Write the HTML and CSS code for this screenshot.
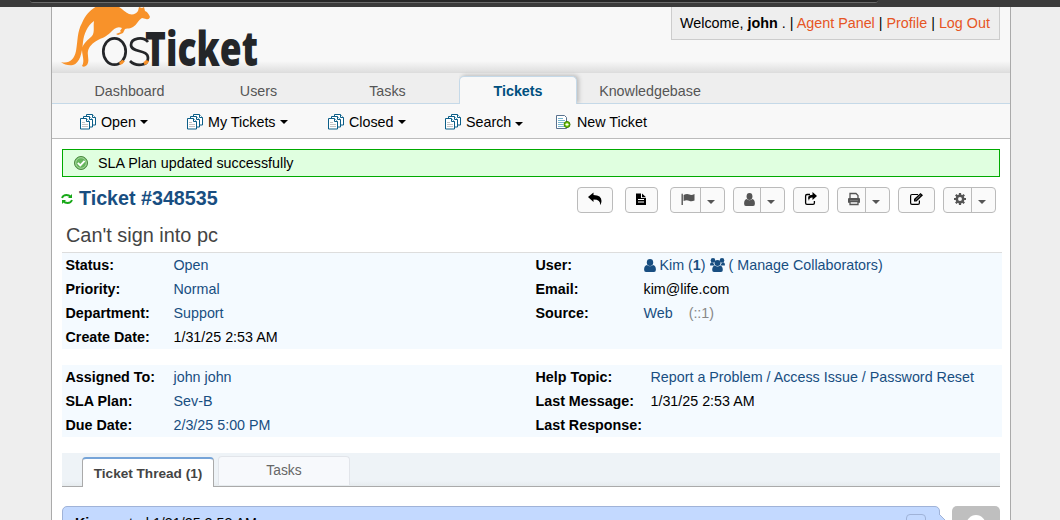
FILE: index.html
```html
<!DOCTYPE html>
<html lang="en">
<head>
<meta charset="utf-8">
<title>osTicket - Ticket #348535</title>
<link rel="stylesheet" href="styles.css">
</head>
<body>
<svg class="defs" width="0" height="0">
  <symbol id="stack" viewBox="0 0 16 16">
    <g fill="#fff" stroke="#0b5e88" stroke-width="1">
      <path d="M6.500 .5h6l3 3v7.500h-9z"/><path d="M12.500 .5v3h3"/>
      <path d="M3.500 2.500h6l3 3v7.500h-9z"/><path d="M9.500 2.500v3h3"/>
      <path d="M.5 4.500h6l3 3v7.500h-9z"/><path d="M6.500 4.500v3h3"/>
    </g>
    <path d="M2 8.500h3M2 10.500h6M2 12.500h6" stroke="#c4c4c4" fill="none"/>
  </symbol>
  <symbol id="user" viewBox="0 0 12 12"><circle cx="6" cy="3.200" r="3.200"/><path d="M3 5.600Q6 7.800 9 5.600Q11.900 6 11.900 10Q11.900 12 10 12H2Q.1 12 .1 10Q.1 6 3 5.600z"/></symbol>
</svg>
<div class="browser"><div class="address"></div></div>
<div class="container">
  <header class="header">
    <svg class="logo" viewBox="52 7 216 64" width="216" height="64">
      <path fill="#f8922a" d="M61 62C69 64 74 60 76 51C78 40 77 32 82 23C86 14 91 9 99 5H115C121 7 124 12 129 14C133 15 136 14 138 11L139 7L142 8L144 7L145 11C148 12 149 15 150 17Q149 20 146 19L142 18C138 20 137 25 133 27C130 29 128 28 125 29L123 33L118 35L116 34L121 32L120 31L122 28C117 26 114 29 111 32C106 37 102 38 98 40C92 43 89 47 88 51C87 56 90 60 87 65Q84 68 82 66C85 61 82 55 82 50C82 44 88 40 92 36C95 32 93 27 94 21C87 26 84 34 83 42C82 53 80 63 73 65Q66 66 61 62z"/>
      <ellipse cx="114.500" cy="51.500" rx="11.200" ry="13.200" fill="none" stroke="#242629" stroke-width="2.700"/>
      <path d="M148 42C143 36 131 38 131 45C131 53 148 49 148 58C148 66 136 67 130 61" fill="none" stroke="#242629" stroke-width="2.700"/>
      <path d="M119.500 63.500Q122 63 123.500 60.500M144 63.500Q147 62.500 147.500 60.500" fill="none" stroke="#f8922a" stroke-width="3.200"/>
      <text class="logo-text" x="145" y="66" textLength="113" lengthAdjust="spacingAndGlyphs">Ticket</text>
    </svg>
    <p class="welcome">Welcome, <b>john</b> . | <a>Agent Panel</a> | <a>Profile</a> | <a>Log Out</a></p>
  </header>
  <nav class="nav">
    <a>Dashboard</a><a>Users</a><a>Tasks</a><a class="active">Tickets</a><a class="knowledge">Knowledgebase</a>
  </nav>
  <nav class="subnav">
    <a class="open"><svg class="ico"><use href="#stack"/></svg>Open<i class="caret"></i></a>
    <a class="mine"><svg class="ico"><use href="#stack"/></svg>My Tickets<i class="caret"></i></a>
    <a class="closed"><svg class="ico"><use href="#stack"/></svg>Closed<i class="caret"></i></a>
    <a class="search"><svg class="ico"><use href="#stack"/></svg>Search<i class="caret wide"></i></a>
    <a class="new"><svg class="ico" viewBox="0 0 16 16"><path d="M.5 1.500h8l2 2v11h-10z" fill="#fff" stroke="#59718e"/><path d="M2 4.500h5M2 6.500h7M2 8.500h6M2 10.500h5M2 12.500h6" stroke="#75b5ce"/><circle cx="11" cy="10.500" r="3" fill="#75c80c" stroke="#347900"/><path d="M11 9v3M9.500 10.500h3" stroke="#fff"/></svg>New Ticket</a>
  </nav>
  <main class="content">
    <div class="notice"><svg width="16" height="16" viewBox="0 0 16 16"><circle cx="8" cy="8" r="6.500" fill="#65b45c" stroke="#4a883f"/><circle cx="8" cy="8" r="5.300" fill="none" stroke="#b7dfb0" stroke-width=".8"/><path d="M4.800 7.900l2.500 2.500 4.300-4.600" fill="none" stroke="#fff" stroke-width="1.900"/></svg>SLA Plan updated successfully</div>
    <div class="titlebar">
      <h2><svg class="refresh" width="12" height="12" viewBox="0 0 12 12" fill="none" stroke="#18a818" stroke-width="1.800"><path d="M1 5Q2 2 5.500 2Q8 2 10 4M11 7Q10 10 6.500 10Q4 10 2 8"/><path d="M11 1v4H7zM1 11V7h4z" fill="#18a818" stroke="none"/></svg>Ticket #348535</h2>
      <div class="actions">
        <span class="btn reply"><svg width="14" height="14" viewBox="0 0 14 14"><path d="M0 5L5.500.5V3Q13.500 3 13.500 9Q13.500 11.500 12 13.300Q13 7.500 5.500 7.500V10z"/></svg></span>
        <span class="btn note"><svg width="12" height="14" viewBox="0 0 12 14"><path d="M1 1.500h5v4.500h5v7H1z"/><path d="M7 1.500l4 3.800H7z"/><path d="M3 7.500h6M3 10h6" stroke="#fff"/></svg></span>
        <span class="btn split flag"><svg width="14" height="14" viewBox="0 0 14 14"><path d="M.5 2.500Q.5 1.500 1.200 1.500Q2 1.500 1.900 3V13H.5zM2.600 3Q6 1 8.500 2.600Q10.500 3.500 13.500 2V8.500Q10.500 10 8 8.700Q5.500 7.700 2.600 9z"/></svg><i></i></span>
        <span class="btn split assign"><svg width="11" height="13" viewBox="0 0 12 12" preserveAspectRatio="none"><use href="#user" width="12" height="12"/></svg><i></i></span>
        <span class="btn share"><svg width="14" height="14" viewBox="0 0 14 14"><path d="M6 2.500H3Q1.600 2.500 1.600 4V11Q1.600 12.400 3 12.400H9Q10.400 12.400 10.400 11V9" fill="none" stroke="#000" stroke-width="1.300"/><path d="M8.500 0L13 4L8.500 8V5.500Q5 5.300 5 9Q2 3 8.500 2.800z"/></svg></span>
        <span class="btn split print"><svg width="14" height="14" viewBox="0 0 14 14"><path d="M3 6V1.500h6l2 2V6M3 9.500h8v3H3z" fill="none" stroke="#555" stroke-width="1.300"/><path d="M1 7Q1 6 2 6H12Q13 6 13 7V10.700H11V8.800H3V10.700H1z"/></svg><i></i></span>
        <span class="btn edit"><svg width="15" height="14" viewBox="0 0 15 14"><path d="M9 2.500H3Q1.600 2.500 1.600 4V11Q1.600 12.400 3 12.400H9Q10.400 12.400 10.400 11V8.500" fill="none" stroke="#000" stroke-width="1.200"/><path d="M5 9.500V7L11.500 1L14 3.300L7.500 9.500z"/><path d="M6.500 8L11.500 3.200" stroke="#fff" stroke-width=".6"/></svg></span>
        <span class="btn split gear"><svg width="12" height="12" viewBox="0 0 12 12"><circle cx="6" cy="6" r="3.200" fill="none" stroke="#555" stroke-width="2.500"/><path d="M6 0v2.500M6 9.500V12M0 6h2.500M9.500 6H12M1.800 1.800l1.700 1.700M8.500 8.500l1.700 1.700M10.200 1.800L8.500 3.500M3.500 8.500l-1.700 1.700" stroke="#555" stroke-width="2.200"/></svg><i></i></span>
      </div>
    </div>
    <h3>Can't sign into pc</h3>
    <section class="info first">
      <dl>
        <dt>Status:</dt><dd><a>Open</a></dd>
        <dt>Priority:</dt><dd><a>Normal</a></dd>
        <dt>Department:</dt><dd><a>Support</a></dd>
        <dt>Create Date:</dt><dd>1/31/25 2:53 AM</dd>
      </dl>
      <dl>
        <dt>User:</dt><dd><a class="people"><svg width="12" height="13" viewBox="0 0 12 12" preserveAspectRatio="none"><use href="#user" width="12" height="12"/></svg><span>Kim (<b>1</b>)</span><svg width="15" height="14" viewBox="0 0 15 14"><circle cx="3" cy="2.400" r="2.300"/><circle cx="12" cy="2.400" r="2.300"/><path d="M0 7Q0 4 2 4.200Q4 5 4.500 7.500H1Q0 7.500 0 7zM15 7Q15 4 13 4.200Q11 5 10.500 7.500H14Q15 7.500 15 7z"/><circle cx="7.500" cy="5" r="3"/><path d="M4.800 7.500Q7.500 9.300 10.200 7.500Q12.800 8 12.800 12Q12.800 14 11 14H4Q2.200 14 2.200 12Q2.200 8 4.800 7.500z"/></svg><span>( Manage Collaborators)</span></a></dd>
        <dt>Email:</dt><dd>kim@life.com</dd>
        <dt>Source:</dt><dd><a>Web</a><span class="ip">(::1)</span></dd>
      </dl>
    </section>
    <section class="info second">
      <dl>
        <dt>Assigned To:</dt><dd><a>john john</a></dd>
        <dt>SLA Plan:</dt><dd><a>Sev-B</a></dd>
        <dt>Due Date:</dt><dd><a>2/3/25 5:00 PM</a></dd>
      </dl>
      <dl>
        <dt>Help Topic:</dt><dd><a>Report a Problem / Access Issue / Password Reset</a></dd>
        <dt>Last Message:</dt><dd>1/31/25 2:53 AM</dd>
        <dt>Last Response:</dt><dd></dd>
      </dl>
    </section>
    <div class="tabs"><span class="tab current">Ticket Thread (1)</span><span class="tab">Tasks</span></div>
    <div class="thread">
      <div class="message"><span><b>Kim</b> posted 1/31/25 2:53 AM</span><span class="menu"></span></div>
      <svg class="pointer" width="12" height="30" viewBox="0 0 12 30"><path d="M0 8L8 16L0 24z" fill="#c3d9ff"/><path d="M0 8L8 16" stroke="#a0b3d8"/></svg>
      <div class="avatar"><i></i></div>
    </div>
  </main>
</div>
</body>
</html>
```
FILE: styles.css
```css
* { box-sizing: border-box; }
body { margin: 0; width: 1060px; height: 520px; overflow: hidden; background: #eee; color: #000; font: 14.3px/24px "Liberation Sans", Arial, sans-serif; }
p, h2, h3, dl, dd { margin: 0; }
.defs { display: block; position: absolute; }
svg { flex: none; }
.browser { height: 7px; background: #3b3b3b; padding-left: 30px; }
.address { width: 848px; height: 3px; background: #282828; border-bottom: 1px solid #6b6b6b; border-radius: 0 0 8px 8px; }
.container { width: 960px; height: 513px; margin-left: 51px; background: #fff; border: solid #aaa; border-width: 0 1px; overflow: hidden; }
.header { height: 66px; display: flex; justify-content: space-between; align-items: flex-start; background: linear-gradient(#f8f8f8 83%, #dfdfdf); border-bottom: 1px solid #ddd; }
.logo-text { font: 800 48px "Open Sans", sans-serif; fill: #242629; }
.welcome { width: 329px; height: 33px; margin-right: 10px; padding: 4px 0 0 8px; background: #eee; border: 1px solid #ccc; border-top: 0; white-space: nowrap; font-size: 14.35px; }
.welcome a { color: #e65524; }
.nav { height: 31px; display: flex; padding: 3px 0 0 13px; background: #eee; border-bottom: 1px solid #c5d9e8; color: #555; }
.nav a { width: 129px; height: 27px; padding-top: 3px; text-align: center; }
.nav a.active { width: 118px; height: 28px; margin-left: 7px; border: 1px solid #c5d9e8; border-bottom: 0; border-radius: 5px 5px 0 0; background: #f8f8f8; color: #00507f; font-weight: bold; padding-top: 2px; box-shadow: 2px -1px 4px #bbb; clip-path: inset(-8px -8px 0 0); }
.nav a.knowledge { width: 146px; }
.subnav { height: 35px; display: flex; align-items: center; padding: 2px 0 0 28px; background: #f8f8f8; border-bottom: 1px solid #bbb; }
.subnav a { display: flex; align-items: center; white-space: nowrap; }
.ico { width: 16px; height: 16px; margin-right: 5px; }
.open { width: 107px; }
.mine { width: 141px; }
.closed { width: 117px; }
.search { width: 111px; }
.caret { border: solid transparent; border-width: 3.5px 3.5px 0; border-top-color: #000; margin-left: 5px; }
.caret { border-width: 4px 4px 0; margin-left: 4px; }
.caret.wide { margin: 4px 0 0 4px; }
.content { padding: 10px 10px 0; }
.notice { height: 28px; display: flex; align-items: center; gap: 9px; padding-left: 10px; background: #e0ffe0; border: 1px solid #0a0; }
.titlebar { height: 40px; display: flex; justify-content: space-between; padding: 9px 4px 0 0; }
h2 { display: flex; align-items: center; gap: 6px; height: 24px; margin-left: -1px; color: #184e81; font-size: 19.7px; }
.refresh { margin-top: 2px; }
.actions { display: flex; margin-top: 1px; }
.btn { height: 26px; display: flex; align-items: center; justify-content: center; background: #fafafa; border: 1px solid #bbb; border-radius: 4px; margin-left: 8px; fill: #000; }
.btn > svg { margin: -2px 1px 0 0; }
.reply { width: 36px; }
.note { width: 33px; margin-left: 12px; }
.share { width: 36px; }
.edit { width: 37px; }
.flag { margin-left: 12px; }
.split { width: 53px; justify-content: space-between; padding-left: 10px; fill: #555; }
.flag { width: 55px; }
.assign { width: 52px; }
.print { padding-left: 9px; }
.gear { padding-left: 10px; }
.split i { width: 24px; height: 24px; border-left: 1px solid #bbb; display: flex; align-items: center; justify-content: center; padding: 4px 3px 0 0; }
.split i::after { content: ""; border: solid transparent; border-width: 4px 4px 0; border-top-color: #555; }
h3 { height: 35px; padding: 6px 0 0 4px; color: #444; font-size: 19.9px; font-weight: normal; line-height: 24px; }
.info { width: 940px; display: grid; grid-template-columns: 470px 470px; background: #f4faff; }
.first { height: 97px; border-top: 1px solid #ddd; }
.second { height: 72px; margin-top: 16px; }
dl { display: grid; grid-template-columns: 108px 1fr; grid-auto-rows: 24px; padding-left: 3.5px; }
.second dl + dl { grid-template-columns: 115px 1fr; }
dt { font-weight: bold; white-space: nowrap; }
dd { white-space: nowrap; }
.info a { color: #184e81; fill: #184e81; }
.people { display: flex; align-items: center; gap: 4px; }
.ip { color: #888; margin-left: 16px; }
.tabs { width: 938px; height: 34px; margin-top: 16px; padding: 4px 0 0 20px; display: flex; align-items: flex-start; gap: 4px; background: linear-gradient(#eef3f7 85%, #e6ebee); border-bottom: 1px solid #aaa; }
.tab { width: 132px; height: 29px; padding-top: 2px; text-align: center; color: #666; background: #f7f9fc; border: 1px solid #e2e5ea; border-bottom: 0; border-radius: 4px 4px 0 0; margin-top: -1px; font-size: 13.8px; }
.tab.current { height: 30px; margin-top: 0; color: #444; background: #fff; border: 1px solid #aaa; border-top: 2px solid #76a4d8; border-bottom: 0; font-weight: bold; font-size: 13.6px; padding-top: 3px; }
.thread { display: flex; margin-top: 19px; width: 938px; }
.message { width: 878px; height: 40px; display: flex; justify-content: space-between; padding: 4px 13px 0 12px; background: #c3d9ff; border: 1px solid #a0b3d8; border-radius: 5px 5px 0 0; }
.menu { width: 20px; height: 20px; margin-top: 3px; border: 1px solid #a0b3d8; border-radius: 4px; }
.pointer { margin-left: -1px; }
.avatar { width: 48px; height: 48px; margin-left: 1px; padding-top: 9px; background: #bfbfbf; border-radius: 5px; }
.avatar i { display: block; width: 20px; height: 22px; margin: 0 auto; background: #fff; border-radius: 50%; }
```
